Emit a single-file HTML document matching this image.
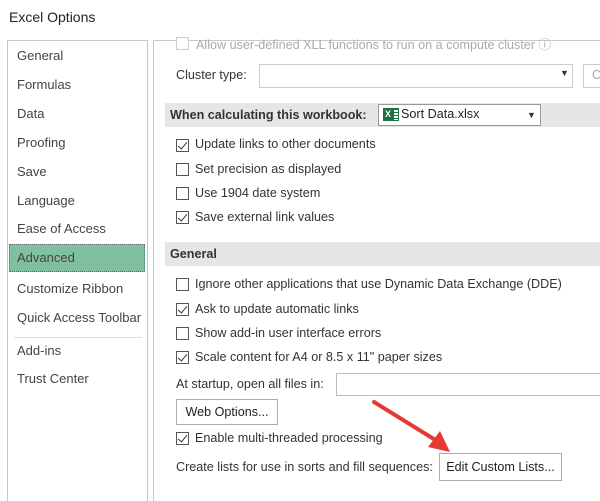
<!DOCTYPE html>
<html><head><style>
body{margin:0;width:600px;height:494px;background:#fff;font-family:"Liberation Sans",sans-serif;font-size:12.6px;color:#333;position:relative;overflow:hidden}
.a{position:absolute;white-space:nowrap}
.cb{position:absolute;width:11px;height:11px;border:1px solid #555;background:#fff}
.cb.c::after{content:"";position:absolute;left:3px;top:0px;width:4px;height:8px;border:solid #333;border-width:0 1.5px 1.5px 0;transform:rotate(40deg)}
.nav{position:absolute;left:17px;font-size:13px;color:#444}
.band{position:absolute;left:165px;width:435px;height:24px;background:#e6e6e6;font-weight:bold;color:#333}
.btn{position:absolute;border:1px solid #adadad;background:#fff;text-align:center;line-height:24px;color:#222}
</style></head><body>
<div class="a" style="left:9px;top:9px;font-size:14px;color:#222">Excel Options</div>
<div style="position:absolute;left:7px;top:40px;width:139px;height:460px;border:1px solid #c8c8c8;border-bottom:none"></div>
<div style="position:absolute;left:153px;top:40px;width:460px;height:460px;border-left:1px solid #c8c8c8;border-top:1px solid #c8c8c8"></div>
<div class="nav" style="top:48px">General</div>
<div class="nav" style="top:77px">Formulas</div>
<div class="nav" style="top:106px">Data</div>
<div class="nav" style="top:135px">Proofing</div>
<div class="nav" style="top:164px">Save</div>
<div class="nav" style="top:193px">Language</div>
<div class="nav" style="top:221px">Ease of Access</div>
<div style="position:absolute;left:9px;top:244px;width:136px;height:28px;background:#80bf9f;border:1px dotted #666;box-sizing:border-box"></div>
<div class="nav" style="top:250px">Advanced</div>
<div class="nav" style="top:281px">Customize Ribbon</div>
<div class="nav" style="top:310px">Quick Access Toolbar</div>
<div style="position:absolute;left:14px;top:337px;width:128px;height:1px;background:#ddd"></div>
<div class="nav" style="top:343px">Add-ins</div>
<div class="nav" style="top:371px">Trust Center</div>

<div class="cb" style="left:176px;top:37px;border-color:#ccc"></div>
<div class="a" style="left:196px;top:34px;color:#aaa">Allow user-defined XLL functions to run on a compute cluster ⓘ</div>
<div class="a" style="left:176px;top:68px">Cluster type:</div>
<div style="position:absolute;left:259px;top:64px;width:312px;height:22px;border:1px solid #ccc"></div>
<div class="a" style="left:560px;top:68px;font-size:9px">▼</div>
<div style="position:absolute;left:583px;top:64px;width:30px;height:22px;border:1px solid #ccc"></div>
<div class="a" style="left:592px;top:68px;color:#aaa">C</div>

<div class="band" style="top:103px"><span style="position:absolute;left:5px;top:5px">When calculating this workbook:</span></div>
<div style="position:absolute;left:378px;top:104px;width:161px;height:20px;border:1px solid #999;background:#fff"></div>
<div style="position:absolute;left:383px;top:108px;width:10px;height:13px;background:#1e7145;color:#fff;font-size:9px;font-weight:bold;line-height:13px;text-align:center">X</div>
<div style="position:absolute;left:393px;top:108px;width:6px;height:13px;background:repeating-linear-gradient(#1e7145 0 1px,#fff 1px 3px);border:1px solid #1e7145;box-sizing:border-box"></div>
<div class="a" style="left:401px;top:107px;color:#222">Sort Data.xlsx</div>
<div class="a" style="left:527px;top:110px;font-size:9px">▼</div>

<div class="cb c" style="left:176px;top:139px"></div><div class="a" style="left:195px;top:137px">Update links to other documents</div>
<div class="cb" style="left:176px;top:163px"></div><div class="a" style="left:195px;top:162px">Set precision as displayed</div>
<div class="cb" style="left:176px;top:187px"></div><div class="a" style="left:195px;top:186px">Use 1904 date system</div>
<div class="cb c" style="left:176px;top:211px"></div><div class="a" style="left:195px;top:210px">Save external link values</div>

<div class="band" style="top:242px"><span style="position:absolute;left:5px;top:5px">General</span></div>
<div class="cb" style="left:176px;top:278px"></div><div class="a" style="left:195px;top:277px">Ignore other applications that use Dynamic Data Exchange (DDE)</div>
<div class="cb c" style="left:176px;top:303px"></div><div class="a" style="left:195px;top:302px">Ask to update automatic links</div>
<div class="cb" style="left:176px;top:327px"></div><div class="a" style="left:195px;top:326px">Show add-in user interface errors</div>
<div class="cb c" style="left:176px;top:351px"></div><div class="a" style="left:195px;top:350px">Scale content for A4 or 8.5 x 11" paper sizes</div>
<div class="a" style="left:176px;top:377px">At startup, open all files in:</div>
<div style="position:absolute;left:336px;top:373px;width:270px;height:21px;border:1px solid #bbb"></div>
<div class="btn" style="left:176px;top:399px;width:100px;height:24px">Web Options...</div>
<div class="cb c" style="left:176px;top:432px"></div><div class="a" style="left:195px;top:431px">Enable multi-threaded processing</div>
<div class="a" style="left:176px;top:460px">Create lists for use in sorts and fill sequences:</div>
<div class="btn" style="left:439px;top:453px;width:121px;height:26px;line-height:26px">Edit Custom Lists...</div>
<svg style="position:absolute;left:0;top:0" width="600" height="494"><line x1="374" y1="402" x2="437" y2="441" stroke="#e53935" stroke-width="4" stroke-linecap="round"/><polygon points="450,452 428,447 440,431" fill="#e53935"/></svg>
</body></html>
